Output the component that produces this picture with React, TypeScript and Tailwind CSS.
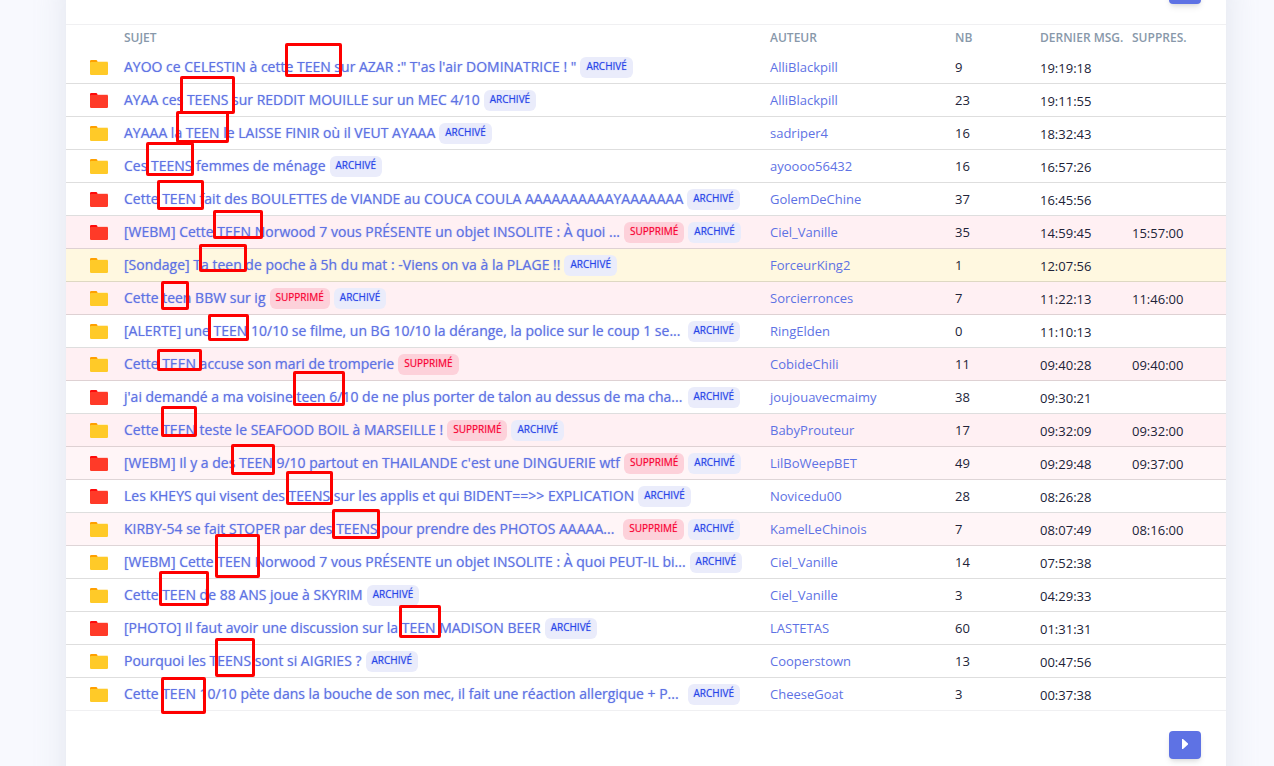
type Tag = "deleted" | "archived";

type Topic = {
  title: string;
  author: string;
  count: number;
  last: string;
  removed?: string;
  hot?: boolean;
  tone?: "rose" | "pale" | "yellow";
  tags: Tag[];
};

const topics: Topic[] = [
  { title: "AYOO ce CELESTIN à cette TEEN sur AZAR :\" T'as l'air DOMINATRICE ! \"", author: "AlliBlackpill", count: 9, last: "19:19:18", tags: ["archived"] },
  { title: "AYAA ces TEENS sur REDDIT MOUILLE sur un MEC 4/10", author: "AlliBlackpill", count: 23, last: "19:11:55", hot: true, tags: ["archived"] },
  { title: "AYAAA la TEEN le LAISSE FINIR où il VEUT AYAAA", author: "sadriper4", count: 16, last: "18:32:43", tags: ["archived"] },
  { title: "Ces TEENS femmes de ménage", author: "ayoooo56432", count: 16, last: "16:57:26", tags: ["archived"] },
  { title: "Cette TEEN fait des BOULETTES de VIANDE au COUCA COULA AAAAAAAAAAYAAAAAAA", author: "GolemDeChine", count: 37, last: "16:45:56", hot: true, tags: ["archived"] },
  { title: "[WEBM] Cette TEEN Norwood 7 vous PRÉSENTE un objet INSOLITE : À quoi ...", author: "Ciel_Vanille", count: 35, last: "14:59:45", removed: "15:57:00", hot: true, tone: "rose", tags: ["deleted", "archived"] },
  { title: "[Sondage] Ta teen de poche à 5h du mat : -Viens on va à la PLAGE !!", author: "ForceurKing2", count: 1, last: "12:07:56", tone: "yellow", tags: ["archived"] },
  { title: "Cette teen BBW sur ig", author: "Sorcierronces", count: 7, last: "11:22:13", removed: "11:46:00", tone: "rose", tags: ["deleted", "archived"] },
  { title: "[ALERTE] une TEEN 10/10 se filme, un BG 10/10 la dérange, la police sur le coup 1 se...", author: "RingElden", count: 0, last: "11:10:13", tags: ["archived"] },
  { title: "Cette TEEN accuse son mari de tromperie", author: "CobideChili", count: 11, last: "09:40:28", removed: "09:40:00", tone: "rose", tags: ["deleted"] },
  { title: "j'ai demandé a ma voisine teen 6/10 de ne plus porter de talon au dessus de ma cha...", author: "joujouavecmaimy", count: 38, last: "09:30:21", hot: true, tags: ["archived"] },
  { title: "Cette TEEN teste le SEAFOOD BOIL à MARSEILLE !", author: "BabyProuteur", count: 17, last: "09:32:09", removed: "09:32:00", tone: "rose", tags: ["deleted", "archived"] },
  { title: "[WEBM] Il y a des TEEN 9/10 partout en THAILANDE c'est une DINGUERIE wtf", author: "LilBoWeepBET", count: 49, last: "09:29:48", removed: "09:37:00", hot: true, tone: "pale", tags: ["deleted", "archived"] },
  { title: "Les KHEYS qui visent des TEENS sur les applis et qui BIDENT==>> EXPLICATION", author: "Novicedu00", count: 28, last: "08:26:28", hot: true, tags: ["archived"] },
  { title: "KIRBY-54 se fait STOPER par des TEENS pour prendre des PHOTOS AAAAA...", author: "KamelLeChinois", count: 7, last: "08:07:49", removed: "08:16:00", tone: "pale", tags: ["deleted", "archived"] },
  { title: "[WEBM] Cette TEEN Norwood 7 vous PRÉSENTE un objet INSOLITE : À quoi PEUT-IL bi...", author: "Ciel_Vanille", count: 14, last: "07:52:38", tags: ["archived"] },
  { title: "Cette TEEN de 88 ANS joue à SKYRIM", author: "Ciel_Vanille", count: 3, last: "04:29:33", tags: ["archived"] },
  { title: "[PHOTO] Il faut avoir une discussion sur la TEEN MADISON BEER", author: "LASTETAS", count: 60, last: "01:31:31", hot: true, tags: ["archived"] },
  { title: "Pourquoi les TEENS sont si AIGRIES ?", author: "Cooperstown", count: 13, last: "00:47:56", tags: ["archived"] },
  { title: "Cette TEEN 10/10 pète dans la bouche de son mec, il fait une réaction allergique + P...", author: "CheeseGoat", count: 3, last: "00:37:38", tags: ["archived"] },
];

// left, top, width, height, measured from the corner of the table
const marks = [
  [219, 19, 57, 34],
  [114, 52, 55, 38],
  [110, 87, 53, 32],
  [80, 118, 48, 34],
  [91, 156, 47, 30],
  [147, 186, 50, 29],
  [133, 220, 48, 28],
  [95, 257, 28, 29],
  [142, 290, 41, 27],
  [91, 325, 45, 22],
  [227, 347, 52, 35],
  [95, 382, 36, 31],
  [165, 420, 44, 31],
  [220, 447, 47, 34],
  [266, 485, 48, 30],
  [149, 510, 45, 44],
  [93, 547, 50, 35],
  [333, 581, 42, 33],
  [149, 614, 40, 39],
  [95, 653, 45, 37],
];

const tones = {
  rose: "bg-[#fff0f3]",
  pale: "bg-[#fff5f7]",
  yellow: "bg-[#fff8e0]",
};

function FolderIcon({ hot }: { hot?: boolean }) {
  return (
    <svg viewBox="0 0 18 15" className="block h-[15px] w-[18px]" aria-hidden="true">
      <path d="M0 1.3Q0 0 1.3 0H6.4L8 1.6V6H0Z" fill={hot ? "#ff0a0a" : "#ffa000"} />
      <path d="M7.5 1H17Q18 1 18 2.2V4H7.5Z" fill={hot ? "#ffd6d2" : "#ffefc4"} />
      <path d="M0 3Q0 2 1 2H17Q18 2 18 3V13.8Q18 15 16.8 15H1.2Q0 15 0 13.8Z" fill={hot ? "#ff3a28" : "#ffca28"} />
    </svg>
  );
}

function Badge({ tag }: { tag: Tag }) {
  return (
    <span
      className={`h-[21px] shrink-0 rounded-md px-1.5 text-[10px] leading-[19px] font-medium uppercase text-shadow-[0_0_1px] ${
        tag === "deleted"
          ? "bg-[#fdd1da] text-[#f80031] text-shadow-[#f80031]/50"
          : "bg-[#eaecfb] text-[#2643e9] text-shadow-[#2643e9]/50"
      }`}
    >
      {tag === "deleted" ? "Supprimé" : "Archivé"}
    </span>
  );
}

function NextButton() {
  return (
    <button
      type="button"
      aria-label="Page suivante"
      className="flex h-7 w-8 items-center justify-center rounded bg-[#5e72e4] shadow-md"
    >
      <svg viewBox="0 0 6 10" className="mb-0.5 h-2.5 w-1.5" aria-hidden="true">
        <path d="M0 0H1L6 4.5V5.5L1 10H0Z" fill="#fff" />
      </svg>
    </button>
  );
}

export default function App() {
  return (
    <div className="h-screen overflow-hidden bg-[#f8f9fe] pr-12 pl-[66px] font-['Open_Sans',sans-serif] text-[#212338]">
      <main className="min-h-screen bg-white shadow-[0_0_32px_rgba(136,152,170,0.2)]">
        <div className="-mt-6 flex justify-end pr-[25px] pb-5">
          <NextButton />
        </div>

        <div className="relative">
          <table className="w-full table-fixed border-separate border-spacing-0 text-left text-[13px]">
            <colgroup>
              <col className="w-[58px]" />
              <col />
              <col className="w-[185px]" />
              <col className="w-[85px]" />
              <col className="w-[92px]" />
              <col className="w-[94px]" />
            </colgroup>
            <thead>
              <tr className="h-[27px] text-[12px] leading-4 whitespace-nowrap text-[#8898aa] uppercase [&>th]:border-t [&>th]:border-[#f0f0f2] [&>th]:p-0 [&>th]:font-semibold">
                <th aria-label="Type"></th>
                <th>Sujet</th>
                <th>Auteur</th>
                <th>Nb</th>
                <th>Dernier msg.</th>
                <th>Suppres.</th>
              </tr>
            </thead>
            <tbody>
              {topics.map((topic) => (
                <tr
                  key={topic.last}
                  className={`h-[33px] leading-5 [&>td]:border-b [&>td]:border-black/13 [&>td]:p-0 last:[&>td]:border-[#f0f0f2] ${
                    topic.tone ? tones[topic.tone] : ""
                  }`}
                >
                  <td>
                    <div className="pl-6">
                      <FolderIcon hot={topic.hot} />
                    </div>
                  </td>
                  <td>
                    <div className="flex items-center gap-1 pr-[30px]">
                      <a
                        href="#"
                        className={`text-[14px] leading-5 font-medium whitespace-nowrap text-[#5e72e4] text-shadow-[0_0_1px] text-shadow-[#5e72e4]/60 ${
                          topic.title.endsWith("...") ? "flex-1" : ""
                        }`}
                      >
                        {topic.title}
                      </a>
                      {topic.tags.map((tag) => (
                        <Badge key={tag} tag={tag} />
                      ))}
                    </div>
                  </td>
                  <td>
                    <a href="#" className="text-[#5e72e4]">
                      {topic.author}
                    </a>
                  </td>
                  <td>{topic.count}</td>
                  <td>
                    <div className="pt-0.5">{topic.last}</div>
                  </td>
                  <td>
                    <div className="pt-0.5">{topic.removed}</div>
                  </td>
                </tr>
              ))}
            </tbody>
          </table>

          {marks.map(([left, top, width, height]) => (
            <span
              key={top}
              className="pointer-events-none absolute rounded-xs border-3 border-[#fe0000]"
              style={{ left, top, width, height }}
            />
          ))}
        </div>

        <div className="flex justify-end pt-5 pr-[25px] pb-12">
          <NextButton />
        </div>
      </main>
    </div>
  );
}
